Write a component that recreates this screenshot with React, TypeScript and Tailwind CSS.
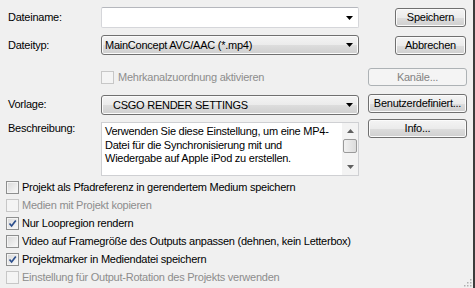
const btn =
  'h-full w-full rounded-[3px] border border-[#707070] bg-[linear-gradient(to_bottom,#f4f4f4_0%,#ebebeb_50%,#dddddd_51%,#cfcfcf_100%)] shadow-[inset_0_0_0_1px_#fbfbfb] text-[11px] text-black';
const btnDisabled =
  'h-full w-full rounded-[3px] border border-[#adb2b5] bg-[#f4f4f4] text-[11px] text-[#838383]';

const Arrow = () => (
  <svg width="7" height="4" viewBox="0 0 7 4" className="shrink-0">
    <polygon points="0,0 7,0 3.5,4" fill="#000" />
  </svg>
);

const Check = ({ checked, disabled }: { checked?: boolean; disabled?: boolean }) => (
  <span
    className={
      disabled
        ? 'flex h-[13px] w-[13px] shrink-0 items-center justify-center border border-[#c7c7c7] bg-[#f4f4f4]'
        : 'flex h-[13px] w-[13px] shrink-0 items-center justify-center border border-[#8e8f8f] bg-[linear-gradient(135deg,#d8d8d8,#fafafa)] shadow-[inset_0_0_0_1px_#f4f4f4]'
    }
  >
    {checked && (
      <svg width="9" height="9" viewBox="0 0 9 9">
        <path d="M1.5 4.5 L3.6 7 L7.8 1.5" stroke="#2b4e8c" strokeWidth="1.7" fill="none" />
      </svg>
    )}
  </span>
);

const options = [
  { label: 'Projekt als Pfadreferenz in gerendertem Medium speichern' },
  { label: 'Medien mit Projekt kopieren', disabled: true },
  { label: 'Nur Loopregion rendern', checked: true },
  { label: 'Video auf Framegröße des Outputs anpassen (dehnen, kein Letterbox)' },
  { label: 'Projektmarker in Mediendatei speichern', checked: true },
  { label: 'Einstellung für Output-Rotation des Projekts verwenden', disabled: true },
];

export default function App() {
  return (
    <div
      className="relative flex h-[288px] w-[475px] flex-col border-r-2 border-[#3c3c3c] bg-[#f0f0f0] text-[11px] leading-[13px] tracking-[-0.25px] text-black"
      style={{ fontFamily: '"Liberation Sans", Arial, sans-serif' }}
    >
      {/* Dateiname */}
      <div className="mt-[7px] flex h-[21px] items-center">
        <span className="w-[101px] pl-[8px]">Dateiname:</span>
        <div className="flex h-full w-[258px] items-center justify-end rounded-[2px] border border-[#d5d6da] border-t-[#b5b7bd] bg-white pr-[5px]">
          <Arrow />
        </div>
        <div className="ml-[36px] h-[19px] w-[71px]">
          <button className={btn}>Speichern</button>
        </div>
      </div>

      {/* Dateityp */}
      <div className="mt-[7px] flex h-[20px] items-center">
        <span className="w-[101px] pl-[8px]">Dateityp:</span>
        <div className="flex h-full w-[258px] items-center justify-between rounded-[3px] border border-[#707070] bg-[linear-gradient(to_bottom,#f4f4f4_0%,#ebebeb_50%,#dddddd_51%,#cfcfcf_100%)] pl-[3px] pr-[5px] shadow-[inset_0_0_0_1px_#fbfbfb]">
          <span>MainConcept AVC/AAC (*.mp4)</span>
          <Arrow />
        </div>
        <div className="ml-[36px] h-[19px] w-[71px]">
          <button className={btn}>Abbrechen</button>
        </div>
      </div>

      {/* Mehrkanal */}
      <div className="mt-[13px] flex h-[18px] items-center">
        <div className="ml-[101px] flex w-[258px] items-center gap-[4px] text-[#8d8d8d]">
          <Check disabled />
          <span>Mehrkanalzuordnung aktivieren</span>
        </div>
        <div className="ml-[9px] h-full w-[99px]">
          <button className={btnDisabled}>Kanäle...</button>
        </div>
      </div>

      {/* Vorlage */}
      <div className="mt-[8px] flex h-[21px] items-start">
        <span className="mt-[4px] w-[101px] pl-[8px]">Vorlage:</span>
        <div className="mt-[1px] flex h-[20px] w-[258px] items-center justify-between rounded-[3px] border border-[#707070] bg-[linear-gradient(to_bottom,#f4f4f4_0%,#ebebeb_50%,#dddddd_51%,#cfcfcf_100%)] pl-[11px] pr-[5px] shadow-[inset_0_0_0_1px_#fbfbfb]">
          <span>CSGO RENDER SETTINGS</span>
          <Arrow />
        </div>
        <div className="ml-[9px] h-[19px] w-[99px]">
          <button className={btn}>Benutzerdefiniert...</button>
        </div>
      </div>

      {/* Beschreibung */}
      <div className="mt-[4px] flex items-start">
        <span className="mt-[3px] w-[101px] pl-[8px]">Beschreibung:</span>
        <div className="mt-[3px] flex h-[54px] w-[258px] border border-[#cfd0d3] bg-white">
          <div className="flex-1 pl-[3px] pt-[2px] leading-[13.5px]">
            Verwenden Sie diese Einstellung, um eine MP4-
            <br />
            Datei für die Synchronisierung mit und
            <br />
            Wiedergabe auf Apple iPod zu erstellen.
          </div>
          <div className="flex w-[16px] flex-col items-center bg-[#f3f3f3]">
            <svg width="7" height="4" viewBox="0 0 7 4" className="mt-[6px]">
              <polygon points="3.5,0 7,4 0,4" fill="#606060" />
            </svg>
            <div className="mt-[6px] h-[14px] w-[14px] rounded-[2px] border border-[#9a9a9a] bg-[linear-gradient(to_right,#f1f1f1,#dcdcdc)]" />
            <svg width="7" height="4" viewBox="0 0 7 4" className="mt-auto mb-[6px]">
              <polygon points="0,0 7,0 3.5,4" fill="#606060" />
            </svg>
          </div>
        </div>
        <div className="ml-[9px] h-[19px] w-[99px]">
          <button className={btn}>Info...</button>
        </div>
      </div>

      {/* Optionen */}
      <div className="mt-[2px] flex flex-col pl-[6px]">
        {options.map((o) => (
          <div
            key={o.label}
            className={`flex h-[18px] items-center gap-[3px] ${o.disabled ? 'text-[#8d8d8d]' : ''}`}
          >
            <Check checked={o.checked} disabled={o.disabled} />
            <span>{o.label}</span>
          </div>
        ))}
      </div>

      <svg width="10" height="10" viewBox="0 0 10 10" className="absolute bottom-[1px] right-[1px]">
        {[
          [8, 2],
          [5, 5],
          [8, 5],
          [2, 8],
          [5, 8],
          [8, 8],
        ].map(([x, y]) => (
          <rect key={`${x}-${y}`} x={x} y={y} width="1.5" height="1.5" fill="#b0b0b0" />
        ))}
      </svg>
    </div>
  );
}
